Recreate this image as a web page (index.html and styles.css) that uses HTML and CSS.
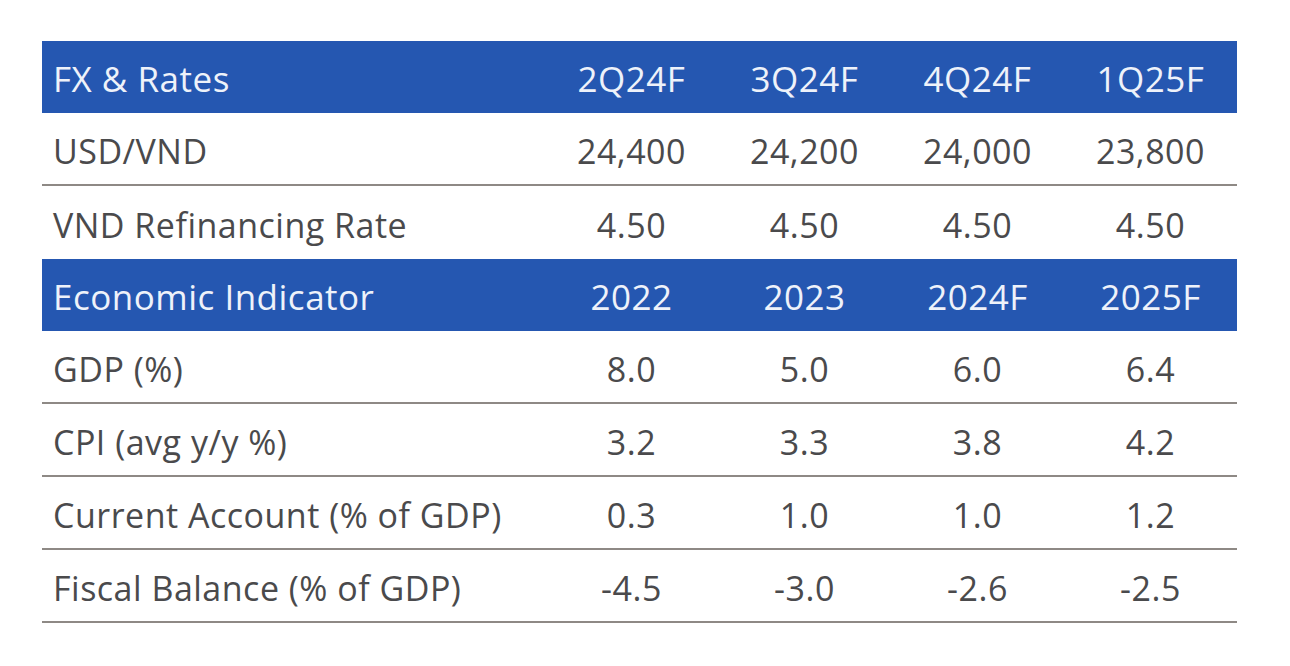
FILE: index.html
```html
<!DOCTYPE html>
<html>
<head>
<meta charset="utf-8">
<link rel="stylesheet" href="styles.css">
</head>
<body>
<div class="table">
  <div class="row head">
    <div class="label">FX &amp; Rates</div><div class="val">2Q24F</div><div class="val">3Q24F</div><div class="val">4Q24F</div><div class="val">1Q25F</div>
  </div>
  <div class="row line">
    <div class="label">USD/VND</div><div class="val">24,400</div><div class="val">24,200</div><div class="val">24,000</div><div class="val">23,800</div>
  </div>
  <div class="row">
    <div class="label">VND Refinancing Rate</div><div class="val">4.50</div><div class="val">4.50</div><div class="val">4.50</div><div class="val">4.50</div>
  </div>
  <div class="row head">
    <div class="label">Economic Indicator</div><div class="val">2022</div><div class="val">2023</div><div class="val">2024F</div><div class="val">2025F</div>
  </div>
  <div class="row line">
    <div class="label">GDP (%)</div><div class="val">8.0</div><div class="val">5.0</div><div class="val">6.0</div><div class="val">6.4</div>
  </div>
  <div class="row line">
    <div class="label">CPI (avg y/y %)</div><div class="val">3.2</div><div class="val">3.3</div><div class="val">3.8</div><div class="val">4.2</div>
  </div>
  <div class="row line">
    <div class="label">Current Account (% of GDP)</div><div class="val">0.3</div><div class="val">1.0</div><div class="val">1.0</div><div class="val">1.2</div>
  </div>
  <div class="row line">
    <div class="label">Fiscal Balance (% of GDP)</div><div class="val">-4.5</div><div class="val">-3.0</div><div class="val">-2.6</div><div class="val">-2.5</div>
  </div>
</div>
</body>
</html>
```
FILE: styles.css
```css
html, body {
  margin: 0;
  padding: 0;
  background: #ffffff;
}
body {
  font-family: "Open Sans", "Liberation Sans", sans-serif;
  color: #4a4a4c;
}
.table {
  margin: 41px 0 0 42px;
  width: 1195px;
}
.row {
  display: grid;
  grid-template-columns: 503px repeat(4, 1fr);
  align-items: center;
  height: 73px;
  box-sizing: border-box;
  font-size: 34px;
  letter-spacing: 0.5px;
  padding-top: 4px;
}
.row.head {
  height: 72px;
  padding-top: 2px;
  background: #2557b1;
  color: #eef2fa;
  font-size: 35px;
}
.row.line {
  border-bottom: 2px solid #8e8985;
}
.label {
  padding-left: 11px;
  white-space: nowrap;
}
.val {
  text-align: center;
  white-space: nowrap;
}
```
